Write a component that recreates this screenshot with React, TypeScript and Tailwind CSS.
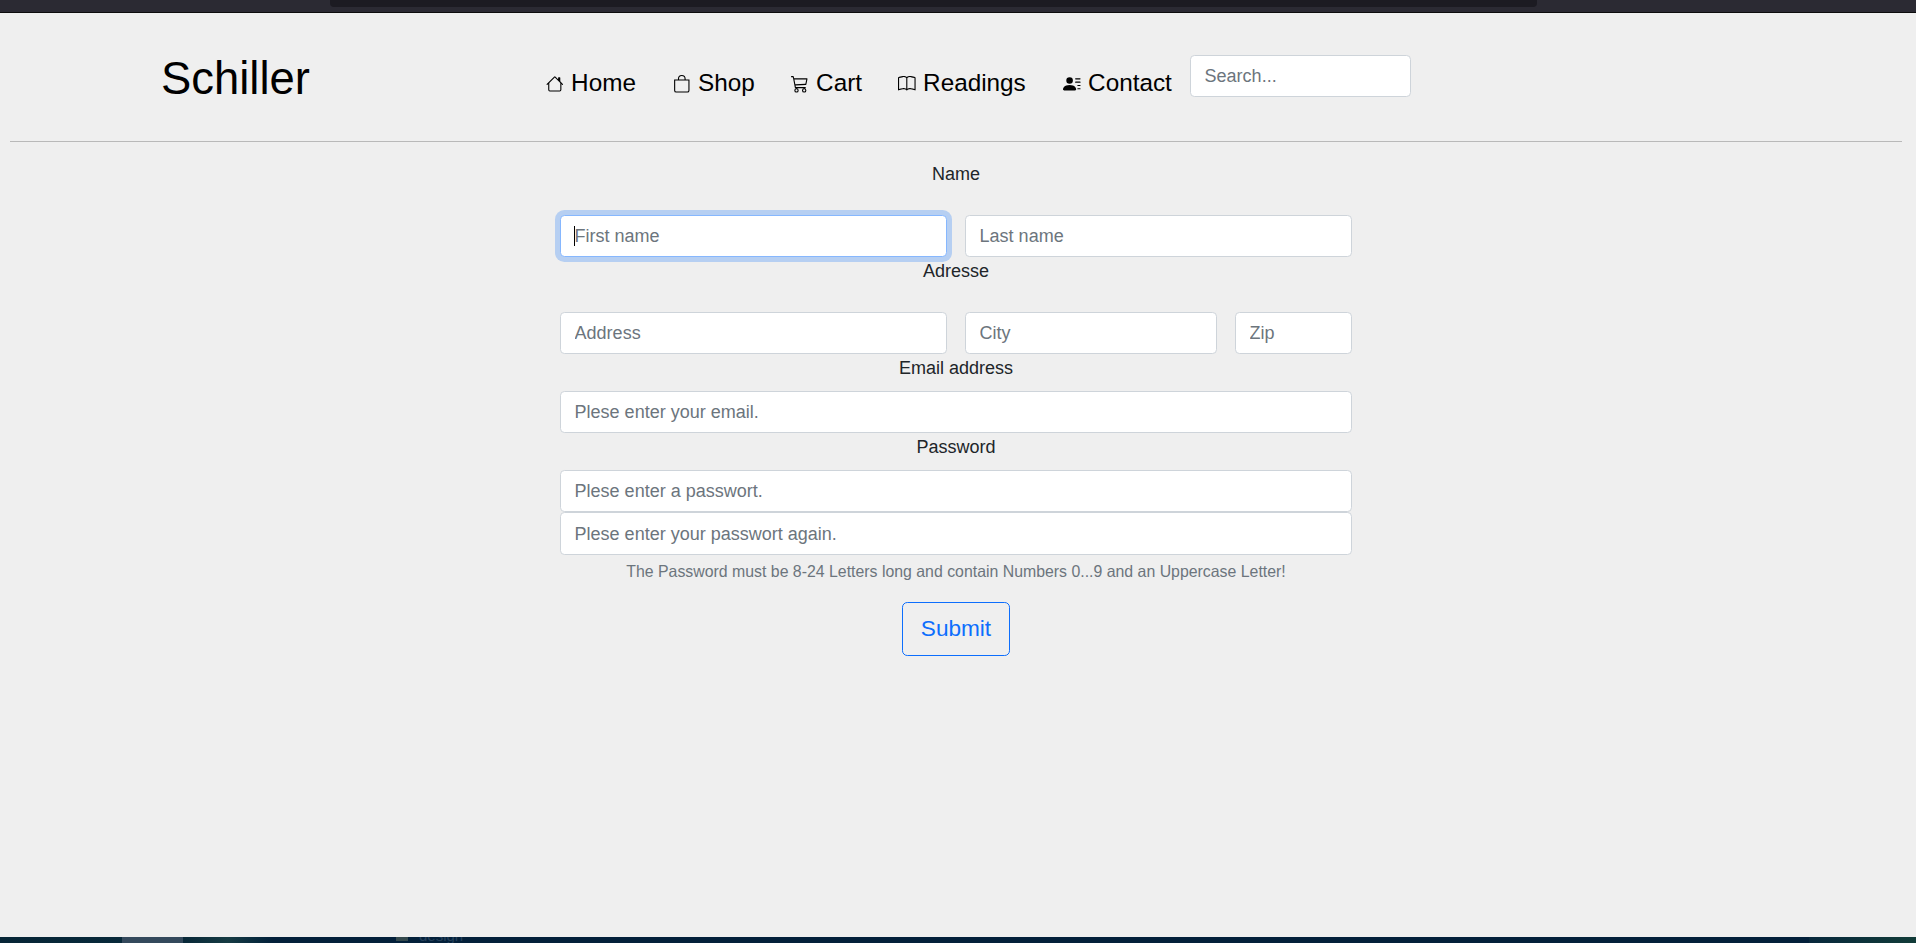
import type { ReactNode } from "react";
import { BsHouse, BsBag, BsCart3, BsBook, BsPersonLinesFill } from "react-icons/bs";

const inputBase =
  "block w-full min-w-0 rounded-[4.4px] border bg-white px-[13.6px] text-[18px] text-[#212529] placeholder:text-[#6c757d] placeholder:opacity-100 outline-none";

function Field({
  placeholder,
  type = "text",
  focused = false,
  height = "h-[42px]",
}: {
  placeholder: string;
  type?: string;
  focused?: boolean;
  height?: string;
}) {
  const state = focused
    ? "border-[#86b7fe] shadow-[0_0_0_5px_rgba(13,110,253,0.25)]"
    : "border-[#ced4da]";
  return <input type={type} placeholder={placeholder} className={`${inputBase} ${height} ${state}`} />;
}

function NavItem({ icon, label, className }: { icon: ReactNode; label: string; className: string }) {
  return (
    <a href="#" className={"flex items-center " + className}>
      <span className="mr-[7.5px] mt-[2px] text-[17.6px]">{icon}</span>
      {label}
    </a>
  );
}

function Label({ children }: { children: ReactNode }) {
  return <div className="h-[26px] pt-px text-center text-[18px] leading-[26px] text-[#212529]">{children}</div>;
}

export default function App() {
  return (
    <div className="flex h-[943px] w-full flex-col overflow-hidden bg-[#efefef] font-['Liberation_Sans',Arial,sans-serif]">
      <div className="h-[13px] shrink-0 border-b border-[#0c0c0d] bg-[#2b2a33]">
        <div className="ml-[330px] h-[7px] w-[1207px] rounded-b-[4px] bg-[#1c1b22]" />
      </div>

      <header className="mr-[14px] ml-[10px] flex h-[129px] shrink-0 items-start border-b border-[#b9b9b9] text-black">
        <div className="ml-[151px] mt-[36px] w-[385px] text-[45.4px] leading-[60px]">Schiller</div>
        <nav className="mt-[52px] flex text-[24.3px] leading-[36px]">
          <NavItem icon={<BsHouse />} label="Home" className="w-[127px]" />
          <NavItem icon={<BsBag />} label="Shop" className="w-[118px]" />
          <NavItem icon={<BsCart3 />} label="Cart" className="w-[107px]" />
          <NavItem icon={<BsBook />} label="Readings" className="w-[165px]" />
          <NavItem icon={<BsPersonLinesFill />} label="Contact" className="w-[127px]" />
        </nav>
        <div className="mt-[42px] w-[221px]">
          <Field placeholder="Search..." />
        </div>
      </header>

      <main className="ml-[560px] w-[792px] grow pt-[18px]">
        <Label>Name</Label>
        <div className="mt-[29px] grid grid-cols-2 gap-[18px]">
          <div className="relative">
            <Field placeholder="First name" focused />
            <span className="absolute left-[14px] top-[11px] h-[20px] w-px bg-black" />
          </div>
          <Field placeholder="Last name" />
        </div>
        <Label>Adresse</Label>
        <div className="mt-[29px] flex gap-[18px]">
          <div className="w-[387px]"><Field placeholder="Address" /></div>
          <div className="w-[252px]"><Field placeholder="City" /></div>
          <div className="w-[117px]"><Field placeholder="Zip" /></div>
        </div>
        <Label>Email address</Label>
        <div className="mt-[11px]"><Field placeholder="Plese enter your email." type="email" /></div>
        <Label>Password</Label>
        <div className="mt-[11px]"><Field placeholder="Plese enter a passwort." type="password" /></div>
        <Field placeholder="Plese enter your passwort again." type="password" height="h-[43px] pt-px" />
        <p className="mt-[5px] text-center text-[15.86px] leading-[24px] text-[#6c757d]">
          The Password must be 8-24 Letters long and contain Numbers 0...9 and an Uppercase Letter!
        </p>
        <div className="mt-[18px] flex justify-center">
          <button className="h-[54px] w-[108px] rounded-[5.3px] border border-[#0d6efd] text-[22.6px] text-[#0d6efd]">
            Submit
          </button>
        </div>
      </main>

      <footer className="flex h-[6px] shrink-0 overflow-hidden bg-[#03203a]">
        <div className="h-full w-[122px] bg-linear-to-r from-[#062536] to-[#08293a]" />
        <div className="h-full w-[61px] bg-[#34495c]" />
        <div className="h-full w-[90px] bg-linear-to-r from-[#082838] via-[#163b43] to-[#03203a]" />
        <div className="ml-[123px] h-[4px] w-[12px] bg-[#34494d]" />
        <div className="ml-[11px] h-[6px] overflow-hidden text-[15px] text-[#25405a]">
          <div className="-mt-[9px] leading-[16px]">design</div>
        </div>
        <div className="ml-auto h-full w-[107px] bg-linear-to-r from-[#08283c] to-[#123c38]" />
      </footer>
    </div>
  );
}
